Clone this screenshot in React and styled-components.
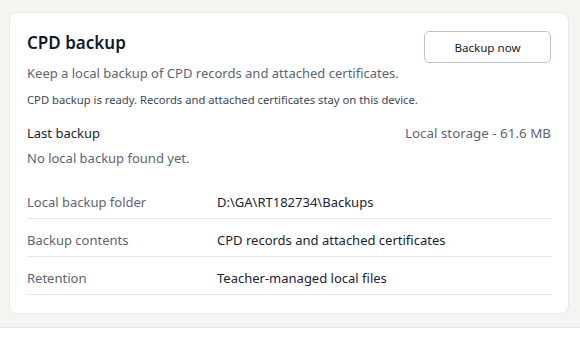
import React from 'react'
import styled, { createGlobalStyle } from 'styled-components'

const GlobalStyle = createGlobalStyle`
    body {
        margin: 0;
        background: #ffffff;
        font-family: "Noto Sans", "Open Sans", sans-serif;
    }
`

const Page = styled.div`
    background: #f4f5f1;
    padding: 12px 11px 13px 9px;
    border-bottom: 1px solid #e1e4e8;
`

const Card = styled.section`
    background: #ffffff;
    border: 1px solid #e6e8ec;
    border-radius: 8px;
    padding: 18px 17px;
`

const Header = styled.div`
    display: flex;
    justify-content: space-between;
    align-items: flex-start;
`

const Title = styled.h2`
    margin: 0;
    font-size: 17px;
    font-weight: 600;
    color: #0f1b2d;
    line-height: 24px;
`

const Lead = styled.p`
    margin: 9px 0 0;
    font-size: 13px;
    color: #5c6573;
    line-height: 18px;
`

const Note = styled.p`
    margin: 10px 0 0;
    font-size: 11.25px;
    color: #3c4656;
    line-height: 16px;
`

const Button = styled.button`
    width: 127px;
    height: 32px;
    border: 1px solid #b9c3d3;
    border-radius: 5px;
    background: #ffffff;
    font-family: inherit;
    font-size: 11.6px;
    color: #101c30;
    cursor: pointer;
`

const Summary = styled.div`
    margin-top: 16px;
    display: flex;
    justify-content: space-between;
    font-size: 13px;
    line-height: 18px;
`

const SummaryLabel = styled.span`
    color: #1a2333;
`

const SummaryMeta = styled.span`
    color: #5c6573;
    font-size: 13.4px;
`

const Empty = styled.p`
    margin: 7px 0 0;
    font-size: 13px;
    color: #5c6573;
    line-height: 18px;
`

const Details = styled.dl`
    margin: 14px 0 0;
`

const Row = styled.div`
    display: grid;
    grid-template-columns: 190px 1fr;
    align-items: center;
    box-sizing: border-box;
    height: 38px;
    padding-top: 4px;
    border-bottom: 1px solid #e3e6ea;
    font-size: 13px;
`

const Key = styled.dt`
    color: #5c6573;
`

const Value = styled.dd`
    margin: 0;
    color: #1a2333;
`

const rows = [
    ['Local backup folder', 'D:\\GA\\RT182734\\Backups'],
    ['Backup contents', 'CPD records and attached certificates'],
    ['Retention', 'Teacher-managed local files'],
]

export default function App() {
    return (
        <>
            <GlobalStyle />
            <Page>
                <Card>
                    <Header>
                        <div>
                            <Title>CPD backup</Title>
                            <Lead>Keep a local backup of CPD records and attached certificates.</Lead>
                        </div>
                        <Button>Backup now</Button>
                    </Header>
                    <Note>CPD backup is ready. Records and attached certificates stay on this device.</Note>
                    <Summary>
                        <SummaryLabel>Last backup</SummaryLabel>
                        <SummaryMeta>Local storage - 61.6 MB</SummaryMeta>
                    </Summary>
                    <Empty>No local backup found yet.</Empty>
                    <Details>
                        {rows.map(([k, v]) => (
                            <Row key={k}>
                                <Key>{k}</Key>
                                <Value>{v}</Value>
                            </Row>
                        ))}
                    </Details>
                </Card>
            </Page>
        </>
    )
}
